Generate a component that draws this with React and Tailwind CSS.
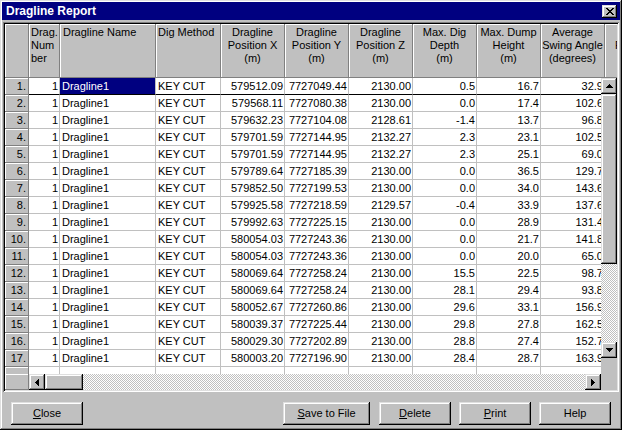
import React from 'react';

const rows = [
  ['579512.09', '7727049.44', '2130.00', '0.5', '16.7', '32.9'],
  ['579568.11', '7727080.38', '2130.00', '0.0', '17.4', '102.6'],
  ['579632.23', '7727104.08', '2128.61', '-1.4', '13.7', '96.8'],
  ['579701.59', '7727144.95', '2132.27', '2.3', '23.1', '102.5'],
  ['579701.59', '7727144.95', '2132.27', '2.3', '25.1', '69.0'],
  ['579789.64', '7727185.39', '2130.00', '0.0', '36.5', '129.7'],
  ['579852.50', '7727199.53', '2130.00', '0.0', '34.0', '143.6'],
  ['579925.58', '7727218.59', '2129.57', '-0.4', '33.9', '137.6'],
  ['579992.63', '7727225.15', '2130.00', '0.0', '28.9', '131.4'],
  ['580054.03', '7727243.36', '2130.00', '0.0', '21.7', '141.8'],
  ['580054.03', '7727243.36', '2130.00', '0.0', '20.0', '65.0'],
  ['580069.64', '7727258.24', '2130.00', '15.5', '22.5', '98.7'],
  ['580069.64', '7727258.24', '2130.00', '28.1', '29.4', '93.8'],
  ['580052.67', '7727260.86', '2130.00', '29.6', '33.1', '156.9'],
  ['580039.37', '7727225.44', '2130.00', '29.8', '27.8', '162.5'],
  ['580029.30', '7727202.89', '2130.00', '28.8', '27.4', '152.7'],
  ['580003.20', '7727196.90', '2130.00', '28.4', '28.7', '163.9'],
];

// column widths include the 1px grid line on the right
const cols = [
  { w: 'w-[31px]', head: ['Drag.', 'Num', 'ber'], headCls: 'text-left pl-[2px]', cellCls: 'justify-end pr-[1px]' },
  { w: 'w-[96px]', head: ['Dragline Name'], headCls: 'text-left pl-[3px]', cellCls: 'justify-start pl-[2px]' },
  { w: 'w-[65px]', head: ['Dig Method'], headCls: 'text-left pl-[2px]', cellCls: 'justify-start pl-[2px]' },
  { w: 'w-[64px]', head: ['Dragline', 'Position X', '(m)'], headCls: 'text-center', cellCls: 'justify-end pr-[1px]' },
  { w: 'w-[64px]', head: ['Dragline', 'Position Y', '(m)'], headCls: 'text-center', cellCls: 'justify-end pr-[1px]' },
  { w: 'w-[64px]', head: ['Dragline', 'Position Z', '(m)'], headCls: 'text-center', cellCls: 'justify-end pr-[1px]' },
  { w: 'w-[64px]', head: ['Max. Dig', 'Depth', '(m)'], headCls: 'text-center', cellCls: 'justify-end pr-[1px]' },
  { w: 'w-[64px]', head: ['Max. Dump', 'Height', '(m)'], headCls: 'text-center', cellCls: 'justify-end pr-[1px]' },
  { w: 'w-[64px]', head: ['Average', 'Swing Angle', '(degrees)'], headCls: 'text-center', cellCls: 'justify-end pr-[1px]' },
];

const raised = 'bg-[#c0c0c0] shadow-[inset_-1px_-1px_#000,inset_1px_1px_#dfdfdf,inset_-2px_-2px_#808080,inset_2px_2px_#fff]';
const headBevel = 'bg-[#c0c0c0] border-r border-b border-[#808080] shadow-[inset_1px_1px_#fff]';
const dither = 'bg-[repeating-conic-gradient(#c0c0c0_0%_25%,#ffffff_0%_50%)] bg-[length:2px_2px]';

const Arrow = ({ dir }) => {
  const pts = {
    up: '3.5,0 7,4 0,4',
    down: '0,0 7,0 3.5,4',
    left: '4,0 4,7 0,3.5',
    right: '0,0 4,3.5 0,7',
  }[dir];
  const vertical = dir === 'up' || dir === 'down';
  return (
    <div className={`w-[16px] h-[16px] shrink-0 flex items-center justify-center ${raised}`}>
      <svg width={vertical ? 7 : 4} height={vertical ? 4 : 7} viewBox={vertical ? '0 0 7 4' : '0 0 4 7'} shapeRendering="crispEdges">
        <polygon points={pts} fill="#000" />
      </svg>
    </div>
  );
};

const Button = ({ w, ml, children }) => (
  <div className={`${w} ${ml} h-[23px] flex items-center justify-center text-black ${raised}`}>
    {children}
  </div>
);

const Row = ({ index, data }) => {
  const first = index === 0;
  const values = ['1', 'Dragline1', 'KEY CUT', ...data];
  return (
    <div className="flex h-[17px] shrink-0">
      <div className={`w-[24px] shrink-0 flex items-center justify-end pr-[2px] ${headBevel}`}>
        {index + 1}.
      </div>
      {cols.map((c, i) => {
        const selected = first && i === 1;
        return (
          <div
            key={i}
            className={`${c.w} shrink-0 flex items-center overflow-hidden whitespace-nowrap border-r border-b ${c.cellCls} ${
              first ? 'border-b-black' : 'border-b-[#c0c0c0]'
            } ${selected ? 'bg-[#000080] text-white border-r-[#c0c0c0]' : 'bg-white text-black border-r-[#c0c0c0]'}`}
          >
            {values[i]}
          </div>
        );
      })}
    </div>
  );
};

export default function App() {
  return (
    <div className="w-[622px] h-[430px] overflow-hidden bg-[#c0c0c0] font-['Liberation_Sans',Arial,sans-serif] text-[11px] text-black">
      <div className="w-full h-full p-[2px] flex flex-col shadow-[inset_-1px_-1px_#000,inset_1px_1px_#dfdfdf,inset_-2px_-2px_#808080,inset_2px_2px_#fff]">
        {/* Title bar */}
        <div className="h-[18px] shrink-0 bg-[#000080] flex items-center justify-between pl-[4px] pr-[3px]">
          <span className="text-white font-bold text-[12px] leading-none">Dragline Report</span>
          <div className={`w-[15px] h-[13px] flex items-center justify-center ${raised}`}>
            <svg width="8" height="7" viewBox="0 0 8 7" shapeRendering="crispEdges">
              <path d="M0 0h2l2 2.5 2-2.5h2l-3 3.5 3 3.5h-2l-2-2.5-2 2.5h-2l3-3.5z" fill="#000" />
            </svg>
          </div>
        </div>

        {/* Grid */}
        <div className="mx-[1px] mt-[2px] h-[370px] shrink-0 p-[2px] shadow-[inset_1px_1px_#808080,inset_-1px_-1px_#fff,inset_2px_2px_#000,inset_-2px_-2px_#dfdfdf]">
          <div className="w-[612px] h-[366px] flex flex-col bg-[#c0c0c0]">
            {/* Header */}
            <div className="flex h-[54px] shrink-0 overflow-hidden">
              <div className={`w-[24px] shrink-0 ${headBevel}`} />
              {cols.map((c, i) => (
                <div key={i} className={`${c.w} shrink-0 pt-[2px] leading-[13px] whitespace-nowrap overflow-hidden ${c.headCls} ${headBevel}`}>
                  {c.head.map((line, j) => (
                    <div key={j}>{line}</div>
                  ))}
                </div>
              ))}
              <div className={`w-[64px] shrink-0 pt-[2px] pl-[10px] leading-[13px] whitespace-nowrap ${headBevel}`}>
                <div>&nbsp;</div>
                <div>Fill Factor</div>
              </div>
            </div>

            {/* Body */}
            <div className="flex h-[312px] shrink-0">
              <div className="w-[596px] flex flex-col overflow-hidden">
                <div className="h-[296px] shrink-0 flex flex-col overflow-hidden">
                  {rows.map((r, i) => (
                    <Row key={i} index={i} data={r} />
                  ))}
                  <div className="flex h-[17px] shrink-0">
                    <div className={`w-[24px] shrink-0 ${headBevel}`} />
                    {cols.map((c, i) => (
                      <div key={i} className={`${c.w} shrink-0 bg-white border-r border-[#c0c0c0]`} />
                    ))}
                  </div>
                </div>
                {/* Horizontal scrollbar */}
                <div className="flex h-[16px] shrink-0">
                  <div className={`w-[24px] shrink-0 ${headBevel}`} />
                  <Arrow dir="left" />
                  <div className={`w-[38px] h-[16px] shrink-0 ${raised}`} />
                  <div className={`flex-1 ${dither}`} />
                  <Arrow dir="right" />
                </div>
              </div>

              {/* Vertical scrollbar */}
              <div className="w-[16px] flex flex-col">
                <Arrow dir="up" />
                <div className={`h-[170px] w-[16px] shrink-0 ${raised}`} />
                <div className={`h-[78px] shrink-0 ${dither}`} />
                <Arrow dir="down" />
                <div className="h-[16px] shrink-0 bg-[#c0c0c0]" />
              </div>
            </div>
          </div>
        </div>

        {/* Buttons */}
        <div className="flex mt-[10px]">
          <Button w="w-[72px]" ml="ml-[9px]">
            <span><span className="underline">C</span>lose</span>
          </Button>
          <Button w="w-[87px]" ml="ml-[200px]">
            <span><span className="underline">S</span>ave to File</span>
          </Button>
          <Button w="w-[72px]" ml="ml-[9px]">
            <span><span className="underline">D</span>elete</span>
          </Button>
          <Button w="w-[72px]" ml="ml-[8px]">
            <span><span className="underline">P</span>rint</span>
          </Button>
          <Button w="w-[72px]" ml="ml-[8px]">
            <span>Help</span>
          </Button>
        </div>
      </div>
    </div>
  );
}
